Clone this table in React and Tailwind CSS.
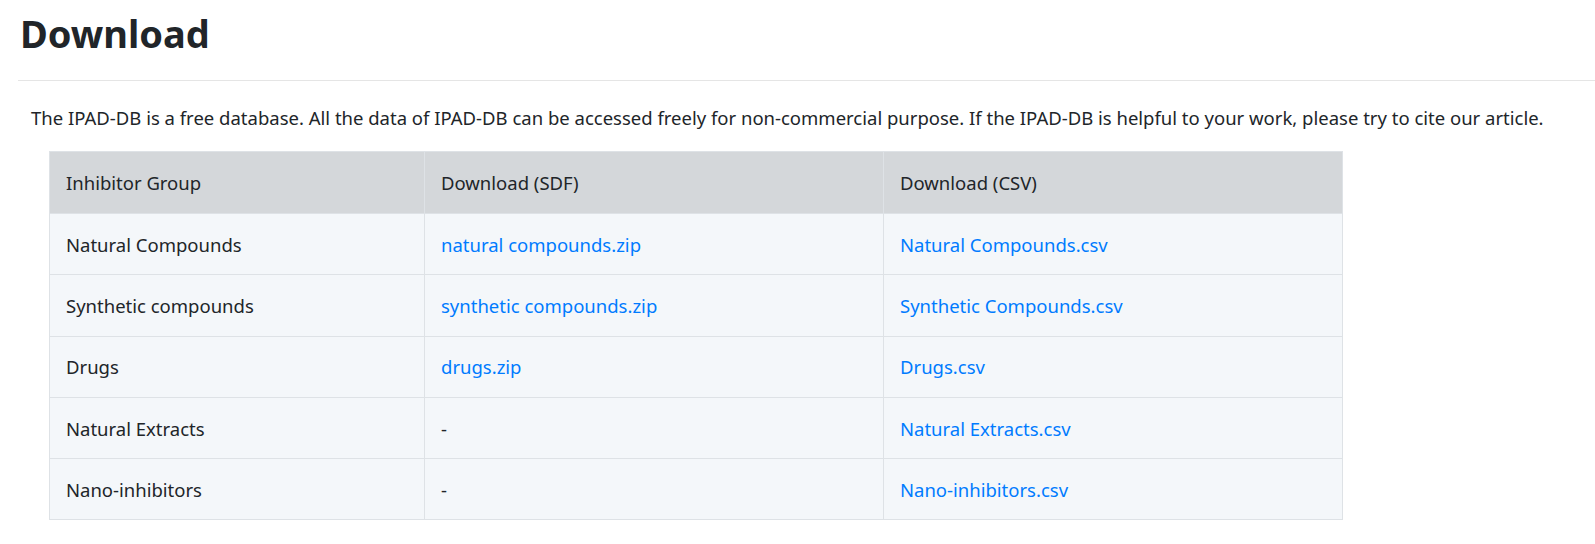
const filas = [
  { grupo: 'Natural Compounds', sdf: 'natural compounds.zip', csv: 'Natural Compounds.csv' },
  { grupo: 'Synthetic compounds', sdf: 'synthetic compounds.zip', csv: 'Synthetic Compounds.csv' },
  { grupo: 'Drugs', sdf: 'drugs.zip', csv: 'Drugs.csv' },
  { grupo: 'Natural Extracts', sdf: null, csv: 'Natural Extracts.csv' },
  { grupo: 'Nano-inhibitors', sdf: null, csv: 'Nano-inhibitors.csv' },
];

export default function App() {
  return (
    <div className="min-h-[544px] bg-white text-[#212529]" style={{ fontFamily: '"Noto Sans", "Open Sans", Arial, sans-serif' }}>
      <div className="pl-[18px]">
        <h1 className="pl-[2px] pt-[9px] pb-[23px] text-[38px] leading-[48px] font-bold">Download</h1>
        <hr className="border-0 border-t border-[#e5e5e5]" />
      </div>

      <div className="pl-[31px] pt-[23px]">
        <p className="text-[18.5px] leading-[27px] whitespace-nowrap">
          The IPAD-DB is a free database. All the data of IPAD-DB can be accessed freely for non-commercial purpose. If the IPAD-DB is helpful to your work, please try to cite our article.
        </p>
      </div>

      <div className="pl-[49px] pt-[20px]">
        <table className="w-[1294px] border-collapse text-[18.5px] leading-[27px]">
          <thead>
            <tr className="bg-[#d4d7da]">
              <th className="w-[375px] h-[62px] px-4 text-left font-normal border border-[#dee2e6]">Inhibitor Group</th>
              <th className="w-[459px] h-[62px] px-4 text-left font-normal border border-[#dee2e6]">Download (SDF)</th>
              <th className="h-[62px] px-4 text-left font-normal border border-[#dee2e6]">Download (CSV)</th>
            </tr>
          </thead>
          <tbody>
            {filas.map(f => (
              <tr key={f.grupo} className="bg-[#f4f7fa]">
                <td className="h-[61.3px] px-4 border border-[#dee2e6]">{f.grupo}</td>
                <td className="h-[61.3px] px-4 border border-[#dee2e6]">
                  {f.sdf ? <a href="#" className="text-[#007bff]">{f.sdf}</a> : '-'}
                </td>
                <td className="h-[61.3px] px-4 border border-[#dee2e6]">
                  <a href="#" className="text-[#007bff]">{f.csv}</a>
                </td>
              </tr>
            ))}
          </tbody>
        </table>
      </div>
    </div>
  );
}
